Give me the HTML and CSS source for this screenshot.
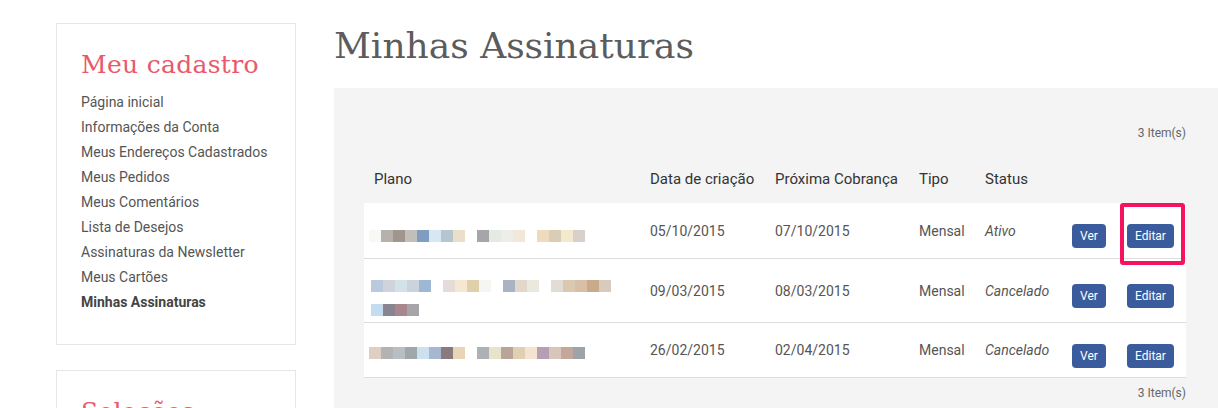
FILE: index.html
```html
<!DOCTYPE html>
<html lang="pt-BR">
<head>
<meta charset="utf-8">
<title>Minhas Assinaturas</title>
<link rel="stylesheet" href="styles.css">
</head>
<body>
<div class="page">
  <aside class="sidebar">
    <section class="side-box">
      <h2 class="side-title">Meu cadastro</h2>
      <ul class="side-nav">
        <li><a href="#">Página inicial</a></li>
        <li><a href="#">Informações da Conta</a></li>
        <li><a href="#">Meus Endereços Cadastrados</a></li>
        <li><a href="#">Meus Pedidos</a></li>
        <li><a href="#">Meus Comentários</a></li>
        <li><a href="#">Lista de Desejos</a></li>
        <li><a href="#">Assinaturas da Newsletter</a></li>
        <li><a href="#">Meus Cartões</a></li>
        <li class="current">Minhas Assinaturas</li>
      </ul>
    </section>
    <section class="side-box">
      <h2 class="side-title">Seleções</h2>
      <ul class="side-nav">
        <li><a href="#">Minhas seleções</a></li>
      </ul>
    </section>
  </aside>

  <main class="main">
    <h1 class="page-title">Minhas Assinaturas</h1>
    <div class="panel">
      <div class="pager">3 Item(s)</div>
      <table class="subs">
        <colgroup>
          <col class="c-plan"><col class="c-date"><col class="c-next"><col class="c-type"><col class="c-status"><col class="c-view"><col class="c-edit">
        </colgroup>
        <thead>
          <tr>
            <th>Plano</th>
            <th>Data de criação</th>
            <th>Próxima Cobrança</th>
            <th>Tipo</th>
            <th>Status</th>
            <th></th>
            <th></th>
          </tr>
        </thead>
        <tbody>
          <tr class="row-1">
            <td>
              <div class="blur blur-1">
                <div class="blur-line"><span class="px r1a"></span><span class="px r1b"></span><span class="px r1c"></span></div>
              </div>
            </td>
            <td>05/10/2015</td>
            <td>07/10/2015</td>
            <td>Mensal</td>
            <td class="status">Ativo</td>
            <td><a class="btn" href="#">Ver</a></td>
            <td class="edit-cell"><a class="btn" href="#">Editar</a><span class="highlight"></span></td>
          </tr>
          <tr class="row-2">
            <td>
              <div class="blur blur-2">
                <div class="blur-line"><span class="px r2a"></span><span class="px r2b"></span><span class="px r2c"></span><span class="px r2d"></span></div>
                <div class="blur-line"><span class="px r2e"></span></div>
              </div>
            </td>
            <td>09/03/2015</td>
            <td>08/03/2015</td>
            <td>Mensal</td>
            <td class="status">Cancelado</td>
            <td><a class="btn" href="#">Ver</a></td>
            <td><a class="btn" href="#">Editar</a></td>
          </tr>
          <tr class="row-3">
            <td>
              <div class="blur blur-3">
                <div class="blur-line"><span class="px r3a"></span><span class="px r3b"></span></div>
              </div>
            </td>
            <td>26/02/2015</td>
            <td>02/04/2015</td>
            <td>Mensal</td>
            <td class="status">Cancelado</td>
            <td><a class="btn" href="#">Ver</a></td>
            <td><a class="btn" href="#">Editar</a></td>
          </tr>
        </tbody>
      </table>
      <div class="pager pager-bottom">3 Item(s)</div>
    </div>
  </main>
</div>
</body>
</html>
```

FILE: styles.css
```css
html, body {
  margin: 0;
  padding: 0;
  overflow: hidden;
  background: #fff;
}

body {
  font-family: Roboto, "Liberation Sans", Arial, sans-serif;
  font-size: 14px;
  color: #555;
}

.page {
  display: grid;
  grid-template-columns: 240px 884px;
  column-gap: 38px;
  padding-left: 56px;
  align-items: start;
}

/* ---------- Sidebar ---------- */
.sidebar {
  display: flex;
  flex-direction: column;
  gap: 25px;
  padding-top: 23px;
}

.side-box {
  border: 1px solid #e6e6e6;
  padding: 23px 24px 29px;
}

.side-title {
  margin: 0 0 7px;
  font-family: "DejaVu Serif", "Liberation Serif", serif;
  font-weight: normal;
  font-size: 25px;
  line-height: 36px;
  letter-spacing: 0.3px;
  color: #e9596b;
}

.side-nav {
  list-style: none;
  margin: 0;
  padding: 0;
}

.side-nav li {
  line-height: 25px;
  font-size: 14px;
  white-space: nowrap;
}

.side-nav a {
  color: #555;
  text-decoration: none;
}

.side-nav .current {
  font-weight: bold;
  color: #444;
}

/* ---------- Main ---------- */
.main {
  padding-top: 21px;
}

.page-title {
  margin: 0;
  font-family: "DejaVu Serif", "Liberation Serif", serif;
  font-weight: normal;
  font-size: 36px;
  line-height: 50px;
  color: #5c5c5c;
}

.panel {
  margin-top: 17px;
  background: #f4f4f4;
  padding: 36px 32px 60px 30px;
}

.pager {
  text-align: right;
  font-size: 12px;
  line-height: 18px;
  color: #666;
}

.pager-bottom {
  margin-top: 6px;
}

.subs {
  margin-top: 13px;
  width: 822px;
  table-layout: fixed;
  border-collapse: separate;
  border-spacing: 0;
}

.c-plan { width: 276px; }
.c-date { width: 125px; }
.c-next { width: 144px; }
.c-type { width: 66px; }
.c-status { width: 87px; }
.c-view { width: 55px; }
.c-edit { width: 69px; }

.subs th {
  height: 48px;
  padding: 0 10px;
  text-align: left;
  font-weight: normal;
  font-size: 15px;
  color: #333;
  line-height: 20px;
  vertical-align: middle;
  white-space: nowrap;
}

.subs td {
  background: #fff;
  padding: 0 10px;
  border-bottom: 1px solid #ddd;
  line-height: 20px;
  vertical-align: middle;
  white-space: nowrap;
  box-sizing: border-box;
}

.row-1 td { height: 56px; }
.row-2 td { height: 64px; }
.row-3 td { height: 55px; }

.status {
  font-style: italic;
}

.edit-cell {
  position: relative;
}

.btn {
  display: block;
  width: max-content;
  margin-top: 11px;
  padding: 0 8px;
  height: 24px;
  line-height: 24px;
  border-radius: 4px;
  background: #3a5b9c;
  color: #fff;
  font-size: 12px;
  text-decoration: none;
}

.highlight {
  position: absolute;
  left: 3px;
  top: 0;
  width: 65px;
  height: 62px;
  box-sizing: border-box;
  border: 4px solid #f5135e;
  border-radius: 3px;
}

/* ---------- Blurred plan names ---------- */
.blur {
  display: flex;
  flex-direction: column;
  gap: 12px;
}

.blur-1 { margin: 11px 0 0 -5px; }
.blur-2 { margin: 15px 0 0 -3px; }
.blur-3 { margin: 6px 0 0 -5px; }

.blur-line {
  display: flex;
  gap: 12px;
  height: 12px;
}

.px {
  display: block;
  height: 12px;
}

.r1a { width: 96px; background: linear-gradient(to right, #f8f8f7 0 12px, #b6b1aa 12px 24px, #a1968d 24px 36px, #c2beb9 36px 48px, #7f9dc3 48px 60px, #d7e7f3 60px 72px, #b6c6d1 72px 84px, #ebdfca 84px 96px); }
.r1b { width: 48px; background: linear-gradient(to right, #a6a6aa 0 12px, #e3ebe3 12px 24px, #eeeee8 24px 36px, #f2e8da 36px 48px); }
.r1c { width: 48px; background: linear-gradient(to right, #efdabd 0 12px, #d9ceb5 12px 24px, #f4e9cc 24px 36px, #d9d0cc 36px 48px); }

.r2a { width: 60px; background: linear-gradient(to right, #b9cadd 0 12px, #d0d2dc 12px 24px, #d3e1ea 24px 36px, #cbd3db 36px 48px, #9db7d4 48px 60px); }
.r2b { width: 48px; background: linear-gradient(to right, #e5dbd8 0 12px, #f5e8d1 12px 24px, #dfcfab 24px 36px, #f5f6f2 36px 48px); }
.r2c { width: 36px; background: linear-gradient(to right, #a9b3c3 0 12px, #e1d8c9 12px 24px, #ebe9dd 24px 36px); }
.r2d { width: 60px; background: linear-gradient(to right, #e1dcd5 0 12px, #dac8b0 12px 24px, #d8c0a8 24px 36px, #c9ab8b 36px 48px, #d8cbbd 48px 60px); }
.r2e { width: 48px; background: linear-gradient(to right, #c4dcf0 0 12px, #888490 12px 24px, #a8888e 24px 36px, #a6a6aa 36px 48px); }

.r3a { width: 96px; background: linear-gradient(to right, #dfcfc0 0 12px, #b4b3b3 12px 24px, #b8bfc2 24px 36px, #a0a7aa 36px 48px, #cde0ef 48px 60px, #a6b8cf 60px 72px, #887a7d 72px 84px, #e8d4b7 84px 96px); }
.r3b { width: 108px; background: linear-gradient(to right, #adb0b5 0 12px, #e6e4cb 12px 24px, #b9a49a 24px 36px, #e1cfb3 36px 48px, #f4e3cf 48px 60px, #b49fb5 60px 72px, #d7c6b9 72px 84px, #c2a79a 84px 96px, #9ea3aa 96px 108px); }
```
